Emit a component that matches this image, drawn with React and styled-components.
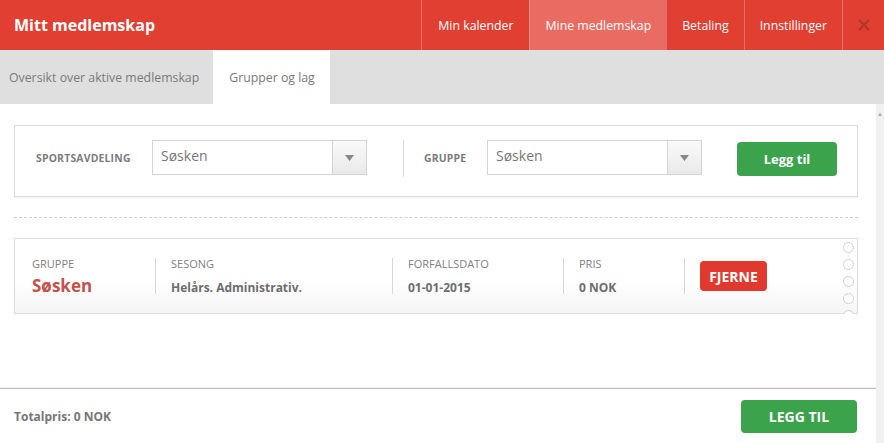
import React from 'react';
import styled, { createGlobalStyle } from 'styled-components';

const GlobalStyle = createGlobalStyle`
  html, body { margin: 0; padding: 0; background: #fff; }
  body { font-family: "Open Sans", "Liberation Sans", sans-serif; }
  #root { height: 443px; overflow: hidden; }
  * { box-sizing: border-box; }
`;

const Page = styled.div`
  display: flex;
  flex-direction: column;
  height: 443px;
`;

const Header = styled.header`
  display: flex;
  align-items: stretch;
  height: 50px;
  background: #e23f33;
  color: #fff;
`;

const Title = styled.h1`
  flex: 1;
  margin: 0;
  padding-left: 14px;
  display: flex;
  align-items: center;
  font-size: 16px;
  font-weight: 700;
`;

const NavItem = styled.div`
  display: flex;
  align-items: center;
  padding: 0 ${(p) => p.$pad ?? 15}px;
  font-size: 12.3px;
  border-left: 1px solid rgba(255, 255, 255, 0.25);
  background: ${(p) => (p.$active ? '#e96b62' : 'transparent')};
`;

const Close = styled.div`
  width: 42px;
  display: flex;
  align-items: center;
  justify-content: center;
  border-left: 1px solid rgba(255, 255, 255, 0.25);
`;

const Tabs = styled.nav`
  display: flex;
  height: 54px;
  background: #dfdfdf;
`;

const Tab = styled.div`
  display: flex;
  align-items: center;
  padding: ${(p) => (p.$active ? '0 15px 0 16px' : '0 14px 0 9px')};
  font-size: 12.3px;
  color: #7a7a7a;
  background: ${(p) => (p.$active ? '#fff' : 'transparent')};
`;

const Body = styled.div`
  flex: 1;
  display: flex;
  min-height: 0;
`;

const Column = styled.div`
  flex: 1;
  min-width: 0;
  display: flex;
  flex-direction: column;
`;

const Scroll = styled.div`
  flex: 1;
  padding: 21px 18px 0 14px;
`;

const Scrollbar = styled.div`
  width: 8px;
  background: #f1f1f1;
  display: flex;
  justify-content: center;
  padding-top: 6px;
  color: #aaa;
  font-size: 6px;
`;

const FilterBox = styled.div`
  display: flex;
  align-items: flex-start;
  height: 72px;
  padding: 14px 20px 0 21px;
  border: 1px solid #dcdcdc;
  box-shadow: 0 1px 2px rgba(0, 0, 0, 0.06);
`;

const Field = styled.div`
  display: flex;
  align-items: center;
  height: 35px;
`;

const FieldLabel = styled.span`
  width: ${(p) => p.$w}px;
  font-size: 10.4px;
  font-weight: 700;
  color: #7c7c7c;
  letter-spacing: 0.2px;
`;

const Select = styled.div`
  display: flex;
  width: 215px;
  height: 35px;
  border: 1px solid #d3d3d3;
  background: #fff;
`;

const SelectValue = styled.div`
  flex: 1;
  padding: 0 8px 4px;
  display: flex;
  align-items: center;
  font-size: 14px;
  color: #777;
`;

const SelectArrow = styled.div`
  width: 34px;
  border-left: 1px solid #d3d3d3;
  background: linear-gradient(#fafafa, #e9e9e9);
  display: flex;
  align-items: center;
  justify-content: center;
`;

const VDivider = styled.div`
  flex: none;
  width: 1px;
  height: ${(p) => p.$h ?? 37}px;
  background: #d8d8d8;
  margin: 0 ${(p) => p.$right ?? 20}px 0 ${(p) => p.$left ?? 36}px;
`;

const Button = styled.button`
  flex: none;
  border: none;
  border-radius: 4px;
  background: ${(p) => (p.$danger ? '#e03a2f' : '#3ba34b')};
  color: #fff;
  font-family: inherit;
  font-weight: 700;
  font-size: ${(p) => p.$size || 13}px;
  width: ${(p) => p.$w}px;
  height: ${(p) => p.$h}px;
  padding: 0;
  margin: ${(p) => p.$m || '0'};
`;

const Dashed = styled.hr`
  margin: 20px 0;
  border: none;
  border-top: 1px dashed #cfcfcf;
`;

const Card = styled.div`
  position: relative;
  display: flex;
  align-items: center;
  height: 76px;
  padding: 0 0 0 17px;
  border: 1px solid #dcdcdc;
  background: linear-gradient(#fff 55%, #f5f5f5);
`;

const Cell = styled.div`
  flex: none;
  width: ${(p) => p.$w}px;
  display: flex;
  flex-direction: column;
  gap: ${(p) => (p.$big ? 3 : 8)}px;
`;

const CellLabel = styled.span`
  font-size: 11px;
  color: #7f7f7f;
`;

const CellValue = styled.span`
  font-weight: 700;
  font-size: ${(p) => (p.$big ? 17 : 12)}px;
  color: ${(p) => (p.$big ? '#c4514a' : '#6d6d6d')};
`;

const Dots = styled.div`
  position: absolute;
  right: 3px;
  top: 3px;
  display: flex;
  flex-direction: column;
  gap: 6px;
  height: 72px;
  overflow: hidden;
`;

const Dot = styled.span`
  flex: none;
  width: 11px;
  height: 11px;
  border-radius: 50%;
  border: 1px solid #cfcfcf;
  background: #fff;
`;

const Footer = styled.footer`
  height: 55px;
  display: flex;
  align-items: center;
  justify-content: space-between;
  padding: 0 19px 0 14px;
  border-top: 1px solid #bdbdbd;
  box-shadow: 0 -1px 2px rgba(0, 0, 0, 0.08);
`;

const Total = styled.span`
  font-size: 12px;
  font-weight: 700;
  color: #777;
`;

const Caret = () => (
  <svg width="9" height="6" viewBox="0 0 9 6">
    <path d="M0 0h9L4.5 6z" fill="#888" />
  </svg>
);

const cols = [
  { label: 'GRUPPE', value: 'Søsken', w: 123, big: true },
  { label: 'SESONG', value: 'Helårs. Administrativ.', w: 221 },
  { label: 'FORFALLSDATO', value: '01-01-2015', w: 155 },
  { label: 'PRIS', value: '0 NOK', w: 105 },
];

export default function App() {
  return (
    <Page>
      <GlobalStyle />
      <Header>
        <Title>Mitt medlemskap</Title>
        <NavItem $pad={16}>Min kalender</NavItem>
        <NavItem $active>Mine medlemskap</NavItem>
        <NavItem>Betaling</NavItem>
        <NavItem>Innstillinger</NavItem>
        <Close>
          <svg width="12" height="12" viewBox="0 0 12 12">
            <path d="M1 1l10 10M11 1L1 11" stroke="#b3342b" strokeWidth="2" />
          </svg>
        </Close>
      </Header>
      <Tabs>
        <Tab>Oversikt over aktive medlemskap</Tab>
        <Tab $active>Grupper og lag</Tab>
      </Tabs>
      <Body>
        <Column>
          <Scroll>
            <FilterBox>
              <Field>
                <FieldLabel $w={116}>SPORTSAVDELING</FieldLabel>
                <Select>
                  <SelectValue>Søsken</SelectValue>
                  <SelectArrow><Caret /></SelectArrow>
                </Select>
              </Field>
              <VDivider />
              <Field>
                <FieldLabel $w={63}>GRUPPE</FieldLabel>
                <Select>
                  <SelectValue>Søsken</SelectValue>
                  <SelectArrow><Caret /></SelectArrow>
                </Select>
              </Field>
              <Button $w={100} $h={34} $m="2px 0 0 35px">Legg til</Button>
            </FilterBox>
            <Dashed />
            <Card>
              {cols.map((c) => (
                <React.Fragment key={c.label}>
                  <Cell $w={c.w} $big={c.big}>
                    <CellLabel>{c.label}</CellLabel>
                    <CellValue $big={c.big}>{c.value}</CellValue>
                  </Cell>
                  <VDivider $h={36} $left={0} $right={15} />
                </React.Fragment>
              ))}
              <Button $danger $w={67} $h={30} $size={14}>FJERNE</Button>
              <Dots>
                {[0, 1, 2, 3, 4].map((d) => <Dot key={d} />)}
              </Dots>
            </Card>
          </Scroll>
          <Footer>
            <Total>Totalpris: 0 NOK</Total>
            <Button $w={116} $h={33} $size={14}>LEGG TIL</Button>
          </Footer>
        </Column>
        <Scrollbar>▲</Scrollbar>
      </Body>
    </Page>
  );
}
